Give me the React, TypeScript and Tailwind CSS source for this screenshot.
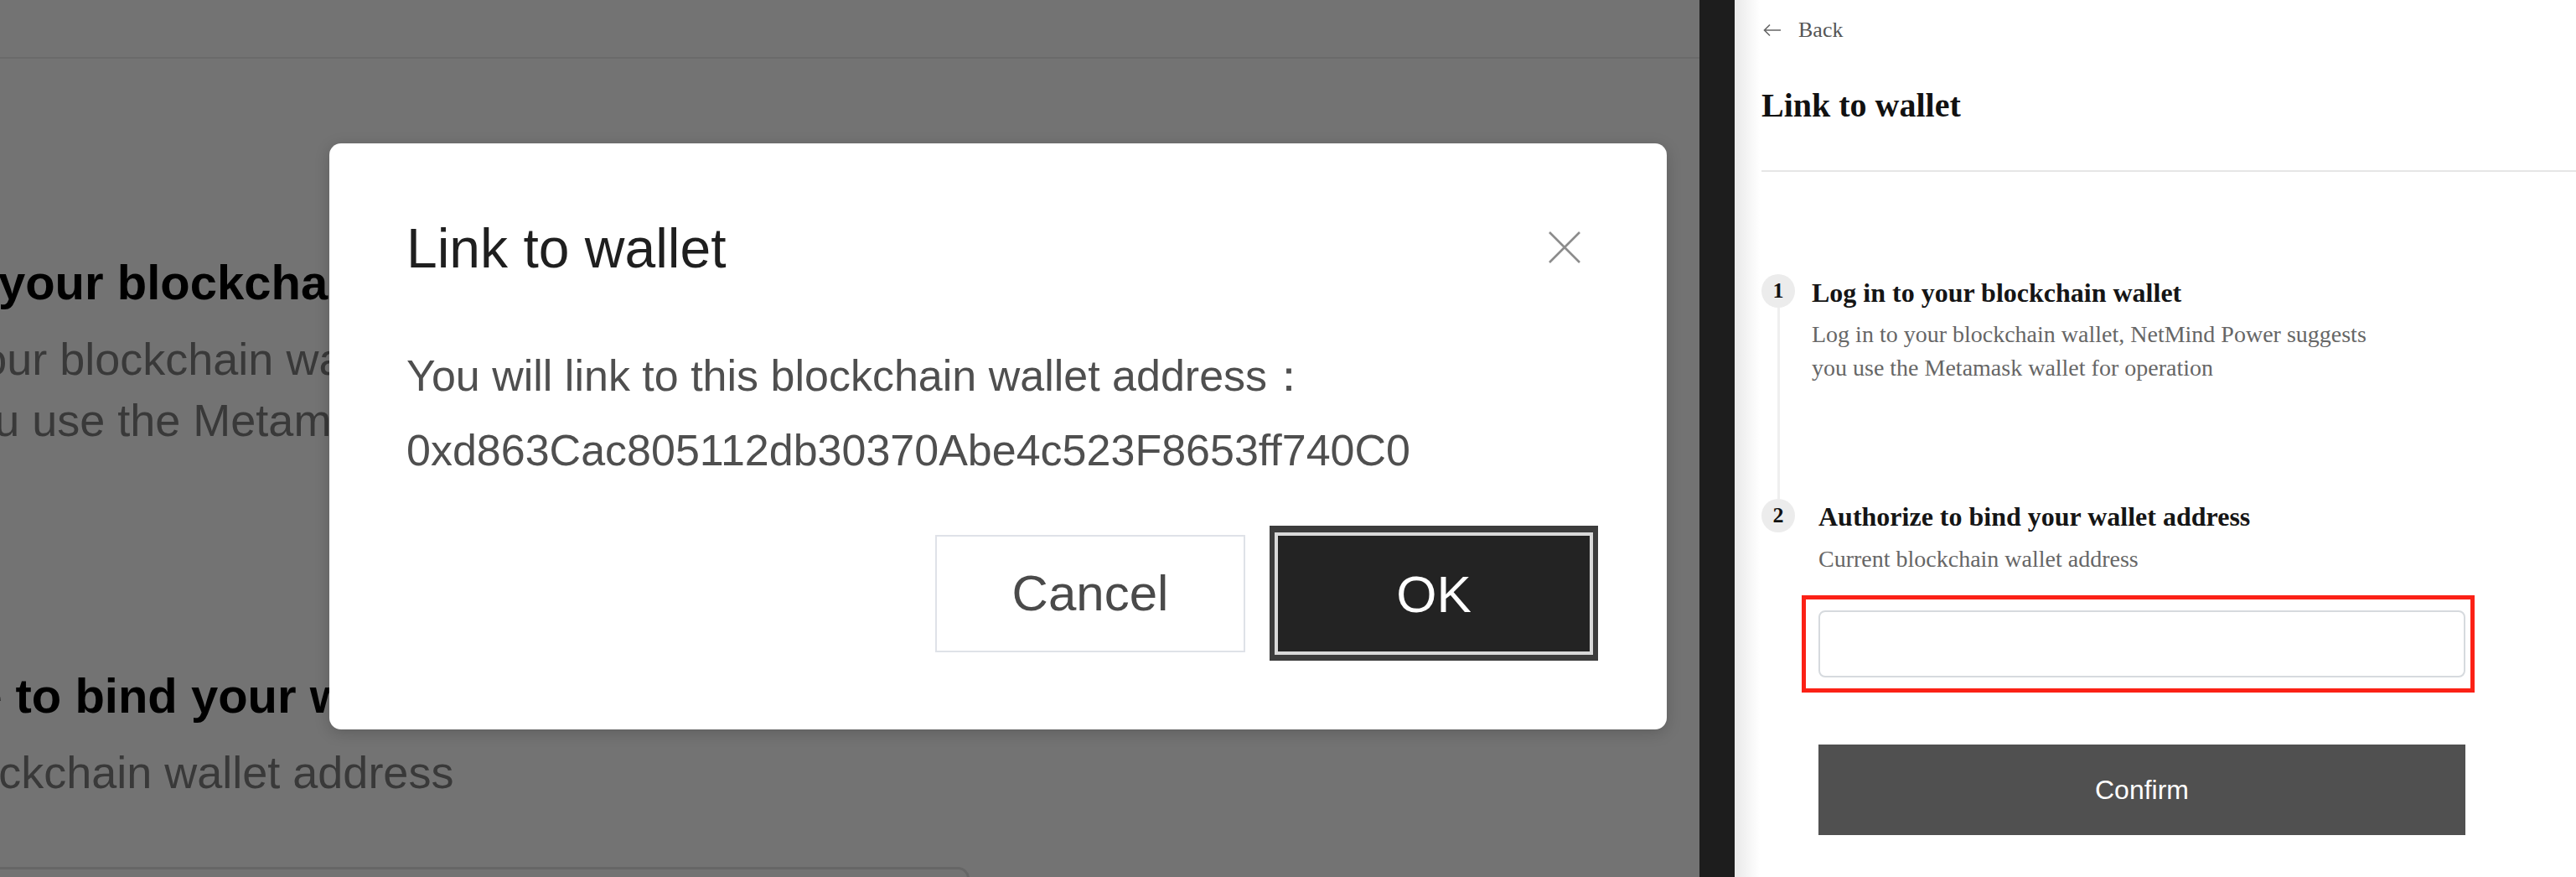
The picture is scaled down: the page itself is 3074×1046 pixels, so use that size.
import React from "react";

const sans = "font-['Liberation_Sans',Arial,sans-serif]";
const serif = "font-['Liberation_Serif','Times_New_Roman',serif]";

function BackgroundPage() {
  return (
    <div className={`absolute inset-0 bg-white ${sans}`}>
      <div className="h-[70px] border-b-2 border-[#ececec]" />
      {/* only the strip left of the modal is visible */}
      <div className="w-[393px] overflow-hidden whitespace-nowrap">
        <div className="ml-[-263px] mt-[232px] text-[58px] leading-[70px] font-bold text-black">
          Log in to your blockchain wallet
        </div>
        <div className="mt-[20px] text-[54px] leading-[73px] text-[#7f7f7f]">
          <div className="ml-[-271px]">Log in to your blockchain wallet, NetMind Power</div>
          <div className="ml-[-295px]">suggests you use the Metamask wallet for operation</div>
        </div>
        <div className="ml-[-265px] mt-[257px] text-[58px] leading-[70px] font-bold text-black">
          Authorize to bind your wallet address
        </div>
      </div>
      <div className="ml-[-269px] mt-[20px] whitespace-nowrap text-[54px] leading-[73px] text-[#7f7f7f]">
        Current blockchain wallet address
      </div>
      <div className="ml-[-254px] mt-[76px] h-[120px] w-[1411px] rounded-[14px] border-[3px] border-[#e2e2e2] bg-white" />
    </div>
  );
}

function ConfirmModal() {
  return (
    <div className="absolute inset-0 bg-black/55">
      <div
        className={`ml-[393px] mt-[171px] w-[1596px] rounded-[14px] bg-white pl-[92px] pr-[82px] pt-[85px] pb-[82px] shadow-[0_4px_18px_rgba(0,0,0,0.18)] ${sans}`}
      >
        <div className="flex items-center justify-between pr-[21px]">
          <h2 className="text-[66px] leading-[80px] text-[#1f1f1f]">Link to wallet</h2>
          <svg width="38" height="38" viewBox="0 0 38 38" className="mt-[-2px]">
            <path d="M1 1L37 37M37 1L1 37" stroke="#8c8c8c" strokeWidth="2.6" fill="none" />
          </svg>
        </div>
        <div className="mt-[68px] text-[52px] leading-[89px] text-[#4f4f4f]">
          <p>You will link to this blockchain wallet address：</p>
          <p>0xd863Cac805112db30370Abe4c523F8653ff740C0</p>
        </div>
        <div className="mt-[45px] flex items-center justify-end gap-[29px]">
          <button className="h-[140px] w-[370px] border-2 border-[#dfe2e8] bg-white text-[60px] text-[#4a4a4a]">
            Cancel
          </button>
          <div className="bg-[#3c3c3c] px-[6px] pt-[8px] pb-[7px]">
            <button className="flex h-[146px] w-[380px] items-center justify-center border-4 border-[#d9d9d9] bg-[#232323] text-[62px] text-white">
              OK
            </button>
          </div>
        </div>
      </div>
    </div>
  );
}

function StepBadge({ n }: { n: number }) {
  return (
    <div
      className={`flex h-[40px] w-[40px] shrink-0 items-center justify-center rounded-full bg-[#ececec] text-[26px] font-bold leading-none text-[#111] ${serif}`}
    >
      {n}
    </div>
  );
}

function WalletPanel() {
  return (
    <aside
      className={`flex h-full w-[1004px] shrink-0 flex-col bg-[linear-gradient(to_right,#e9e9e9_0px,#ffffff_30px)] pl-[32px] ${serif}`}
    >
      <div className="flex items-center gap-[20px] pt-[20px] text-[26px] leading-[32px] text-[#555]">
        <svg width="22" height="16" viewBox="0 0 22 16" className="ml-[2px]">
          <path d="M21 8H1.5M8 1.5L1.5 8L8 14.5" stroke="#666" strokeWidth="1.6" fill="none" />
        </svg>
        <span>Back</span>
      </div>
      <h1 className="mt-[50px] text-[40px] font-bold leading-[48px] text-[#111]">Link to wallet</h1>
      <div className="mt-[53px] h-[2px] bg-[#e6e6e6]" />

      {/* step 1 */}
      <div className="mt-[122px] flex gap-[20px]">
        <div className="flex w-[40px] flex-col items-center">
          <StepBadge n={1} />
          <div className="w-[3px] flex-1 bg-[#efefef]" />
        </div>
        <div className="pb-[136px]">
          <div className="mt-[2px] text-[32px] font-bold leading-[40px] text-[#151515]">
            Log in to your blockchain wallet
          </div>
          <div className="mt-[10px] text-[28px] leading-[40px] text-[#666]">
            <p>Log in to your blockchain wallet, NetMind Power suggests</p>
            <p>you use the Metamask wallet for operation</p>
          </div>
        </div>
      </div>

      {/* step 2 */}
      <div className="flex gap-[28px]">
        <StepBadge n={2} />
        <div className="flex-1">
          <div className="mt-[1px] text-[32px] font-bold leading-[40px] text-[#151515]">
            Authorize to bind your wallet address
          </div>
          <div className="mt-[11px] text-[28px] leading-[40px] text-[#666]">
            Current blockchain wallet address
          </div>
          <div className="ml-[-20px] mt-[23px] w-[803px] border-[5px] border-[#fb2116] py-[13px] pl-[15px] pr-[6px]">
            <div className="h-[80px] rounded-[8px] border-2 border-[#d6dade] bg-white" />
          </div>
          <button
            className={`mt-[62px] flex h-[108px] w-[772px] items-center justify-center bg-[#505050] text-[32px] text-white ${sans}`}
          >
            Confirm
          </button>
        </div>
      </div>
    </aside>
  );
}

export default function App() {
  return (
    <div className="flex h-[1046px] w-[3074px] overflow-hidden bg-white">
      <section className="relative h-full w-[2028px] shrink-0 overflow-hidden blur-[0.7px]">
        <BackgroundPage />
        <ConfirmModal />
      </section>
      <div className="h-full w-[42px] shrink-0 bg-[#1d1d1d]" />
      <WalletPanel />
    </div>
  );
}
